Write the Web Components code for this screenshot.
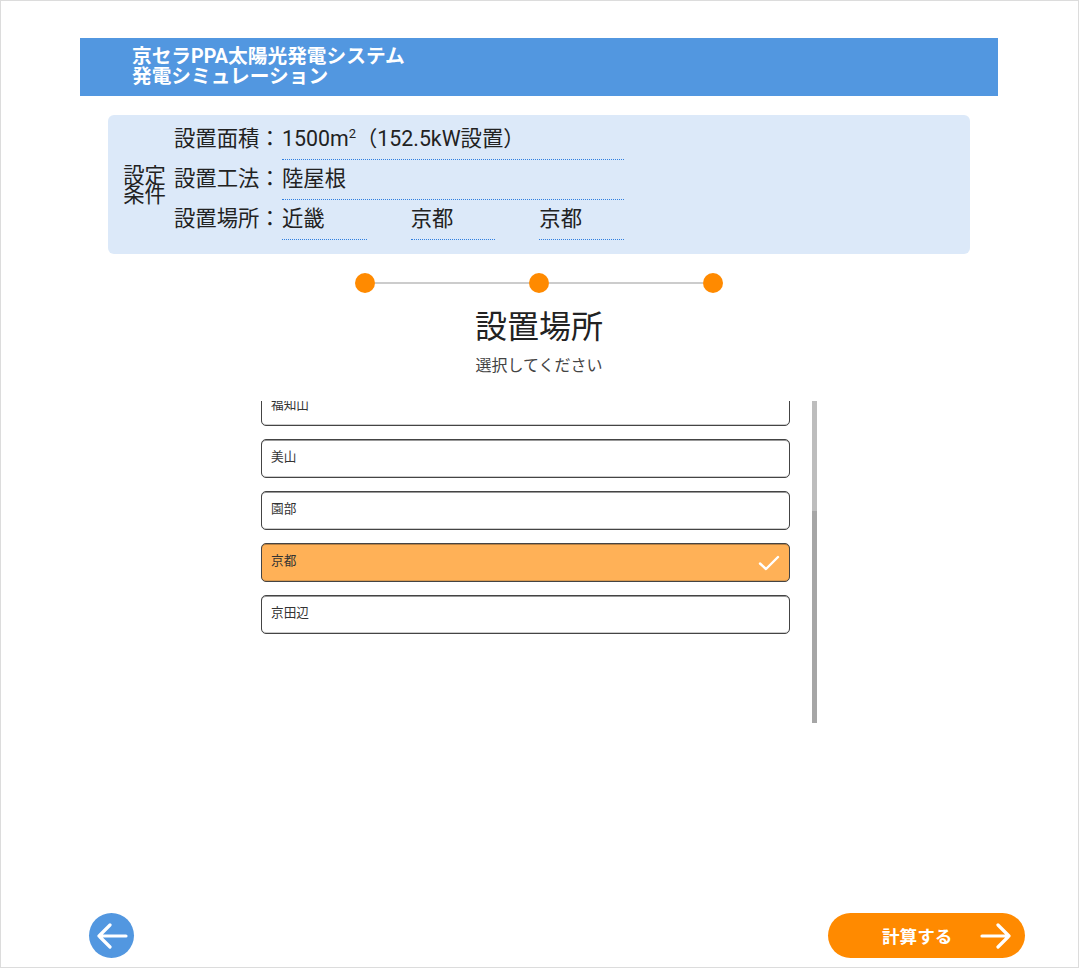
<!DOCTYPE html>
<html lang="ja">
<head>
<meta charset="utf-8">
<title>発電シミュレーション</title>
<style>
  html, body { margin: 0; padding: 0; background: #fff; }
  body { font-family: Roboto, "Noto Sans CJK JP", sans-serif; color: #222; }
</style>
</head>
<body>
<sim-app>
  <sim-header>京セラPPA太陽光発電システム<br>発電シミュレーション</sim-header>
  <sim-conditions>
    <sim-cond-row label="設置面積："><sim-cond-value wide>1500m<sup>2</sup>（152.5kW設置）</sim-cond-value></sim-cond-row>
    <sim-cond-row label="設置工法："><sim-cond-value wide>陸屋根</sim-cond-value></sim-cond-row>
    <sim-cond-row label="設置場所：">
      <sim-cond-value>近畿</sim-cond-value>
      <sim-cond-value>京都</sim-cond-value>
      <sim-cond-value>京都</sim-cond-value>
    </sim-cond-row>
  </sim-conditions>
  <sim-steps></sim-steps>
  <sim-heading title="設置場所" sub="選択してください"></sim-heading>
  <sim-list>
    <sim-option>福知山</sim-option>
    <sim-option>美山</sim-option>
    <sim-option>園部</sim-option>
    <sim-option selected>京都</sim-option>
    <sim-option>京田辺</sim-option>
  </sim-list>
  <sim-nav next="計算する"></sim-nav>
</sim-app>

<script>
class SimApp extends HTMLElement {
  constructor() {
    super();
    this.attachShadow({ mode: 'open' });
    this.shadowRoot.innerHTML = `
      <style>
        :host {
          display: flex;
          flex-direction: column;
          box-sizing: border-box;
          width: 1079px;
          height: 968px;
          border: 1px solid #dcdcdc;
          padding: 37px 0 9px;
          overflow: hidden;
        }
      </style>
      <slot></slot>
    `;
  }
}

class SimHeader extends HTMLElement {
  constructor() {
    super();
    this.attachShadow({ mode: 'open' });
    this.shadowRoot.innerHTML = `
      <style>
        :host {
          display: block;
          box-sizing: border-box;
          width: 918px;
          height: 58px;
          margin-left: 79px;
          padding: 9px 0 0 52px;
          background: #5297e0;
          color: #fff;
          font-size: 19.7px;
          font-weight: 700;
          line-height: 20px;
        }
      </style>
      <slot></slot>
    `;
  }
}

class SimConditions extends HTMLElement {
  constructor() {
    super();
    this.attachShadow({ mode: 'open' });
    this.shadowRoot.innerHTML = `
      <style>
        :host {
          display: flex;
          align-items: center;
          box-sizing: border-box;
          width: 862px;
          height: 139px;
          margin: 19px 0 0 107px;
          padding: 5px 0 14px 15px;
          background: #dce9f9;
          border-radius: 6px;
        }
        .title {
          width: 43px;
          margin: 10px 8px 0 0;
          font-size: 21.33px;
          line-height: 19px;
          text-align: center;
          white-space: nowrap;
        }
        .rows { display: flex; flex-direction: column; }
      </style>
      <div class="title">設定<br>条件</div>
      <div class="rows"><slot></slot></div>
    `;
  }
}

class SimCondRow extends HTMLElement {
  constructor() {
    super();
    this.attachShadow({ mode: 'open' });
    this.shadowRoot.innerHTML = `
      <style>
        :host { display: flex; height: 40px; font-size: 21.33px; }
        .label { width: 108px; line-height: 37px; white-space: nowrap; }
        .values { display: flex; gap: 44px; width: 342px; }
      </style>
      <div class="label"></div>
      <div class="values"><slot></slot></div>
    `;
    this.shadowRoot.querySelector('.label').textContent = this.getAttribute('label');
  }
}

class SimCondValue extends HTMLElement {
  constructor() {
    super();
    this.attachShadow({ mode: 'open' });
    this.shadowRoot.innerHTML = `
      <style>
        :host {
          display: block;
          box-sizing: border-box;
          width: 85px;
          height: 40px;
          line-height: 37px;
          white-space: nowrap;
          border-bottom: 1px dotted #2f7fe0;
        }
        :host([wide]) { width: 342px; }
        ::slotted(sup) { font-size: 13px; line-height: 0; }
      </style>
      <slot></slot>
    `;
  }
}

class SimSteps extends HTMLElement {
  constructor() {
    super();
    this.attachShadow({ mode: 'open' });
    this.shadowRoot.innerHTML = `
      <style>
        :host {
          display: flex;
          align-items: center;
          width: 368px;
          margin: 19px 0 0 354px;
        }
        .dot { flex: none; width: 20px; height: 20px; border-radius: 50%; background: #ff8a00; }
        .line { flex: 1; height: 2px; background: #ccc; }
      </style>
      <div class="dot"></div><div class="line"></div>
      <div class="dot"></div><div class="line"></div>
      <div class="dot"></div>
    `;
  }
}

class SimHeading extends HTMLElement {
  constructor() {
    super();
    this.attachShadow({ mode: 'open' });
    this.shadowRoot.innerHTML = `
      <style>
        :host { display: block; width: 1076px; margin-top: 14px; text-align: center; }
        .title { font-size: 32px; line-height: 40px; color: #222; }
        .sub { margin-top: 7px; font-size: 16px; line-height: 24px; color: #444; }
      </style>
      <div class="title"></div>
      <div class="sub"></div>
    `;
    this.shadowRoot.querySelector('.title').textContent = this.getAttribute('title');
    this.shadowRoot.querySelector('.sub').textContent = this.getAttribute('sub');
  }
}

class SimList extends HTMLElement {
  constructor() {
    super();
    this.attachShadow({ mode: 'open' });
    this.shadowRoot.innerHTML = `
      <style>
        :host {
          display: flex;
          height: 322px;
          margin: 23px 0 0 260px;
        }
        .viewport { width: 529px; overflow: hidden; }
        .items {
          display: flex;
          flex-direction: column;
          gap: 13px;
          margin-top: -14px;
        }
        .bar { width: 5px; margin-left: 22px; background: #a6a6a6; }
        .bar div { height: 110px; background: #bdbdbd; }
      </style>
      <div class="viewport"><div class="items"><slot></slot></div></div>
      <div class="bar"><div></div></div>
    `;
  }
}

class SimOption extends HTMLElement {
  constructor() {
    super();
    this.attachShadow({ mode: 'open' });
    this.shadowRoot.innerHTML = `
      <style>
        :host {
          display: flex;
          align-items: center;
          justify-content: space-between;
          box-sizing: border-box;
          height: 39px;
          padding: 0 9px 6px 9px;
          background: #fff;
          border: 1px solid #444;
          border-radius: 5px;
          box-shadow: inset 0 1px 0 #999, inset 0 -1px 0 #ccc;
          font-size: 12.67px;
          color: #333;
        }
        :host([selected]) {
          background: #ffb157;
          box-shadow: inset 0 1px 0 #b98040, inset 0 -1px 0 #d99a50;
        }
        svg { display: none; }
        :host([selected]) svg { display: block; margin-top: 6px; }
      </style>
      <slot></slot>
      <svg width="22" height="16" viewBox="0 0 22 16" fill="none" stroke="#fff" stroke-width="2.4" stroke-linecap="round" stroke-linejoin="round">
        <path d="M2 8.5 L8 14 L20 2"/>
      </svg>
    `;
  }
}

class SimNav extends HTMLElement {
  constructor() {
    super();
    this.attachShadow({ mode: 'open' });
    this.shadowRoot.innerHTML = `
      <style>
        :host {
          display: flex;
          align-items: center;
          justify-content: space-between;
          margin: auto 53px 0 88px;
        }
        button {
          display: flex;
          align-items: center;
          height: 45px;
          padding: 0;
          border: none;
          color: #fff;
          font: inherit;
          cursor: pointer;
        }
        .back {
          justify-content: center;
          width: 45px;
          border-radius: 50%;
          background: #5297e0;
        }
        .next {
          width: 197px;
          padding-left: 54px;
          box-sizing: border-box;
          border-radius: 23px;
          background: #ff8a00;
          font-size: 17.6px;
          font-weight: 700;
        }
        .next svg { margin-left: 28px; }
      </style>
      <button class="back" type="button" aria-label="戻る">
        <svg width="32" height="26" viewBox="0 0 32 26" fill="none" stroke="#fff" stroke-width="3.2" stroke-linecap="round" stroke-linejoin="round">
          <path d="M30 13 H3 M14 2 L3 13 L14 24"/>
        </svg>
      </button>
      <button class="next" type="button">
        <span></span>
        <svg width="32" height="26" viewBox="0 0 32 26" fill="none" stroke="#fff" stroke-width="3.2" stroke-linecap="round" stroke-linejoin="round">
          <path d="M2 13 H29 M18 2 L29 13 L18 24"/>
        </svg>
      </button>
    `;
    this.shadowRoot.querySelector('.next span').textContent = this.getAttribute('next');
  }
}

customElements.define('sim-app', SimApp);
customElements.define('sim-header', SimHeader);
customElements.define('sim-conditions', SimConditions);
customElements.define('sim-cond-row', SimCondRow);
customElements.define('sim-cond-value', SimCondValue);
customElements.define('sim-steps', SimSteps);
customElements.define('sim-heading', SimHeading);
customElements.define('sim-list', SimList);
customElements.define('sim-option', SimOption);
customElements.define('sim-nav', SimNav);
</script>
</body>
</html>
